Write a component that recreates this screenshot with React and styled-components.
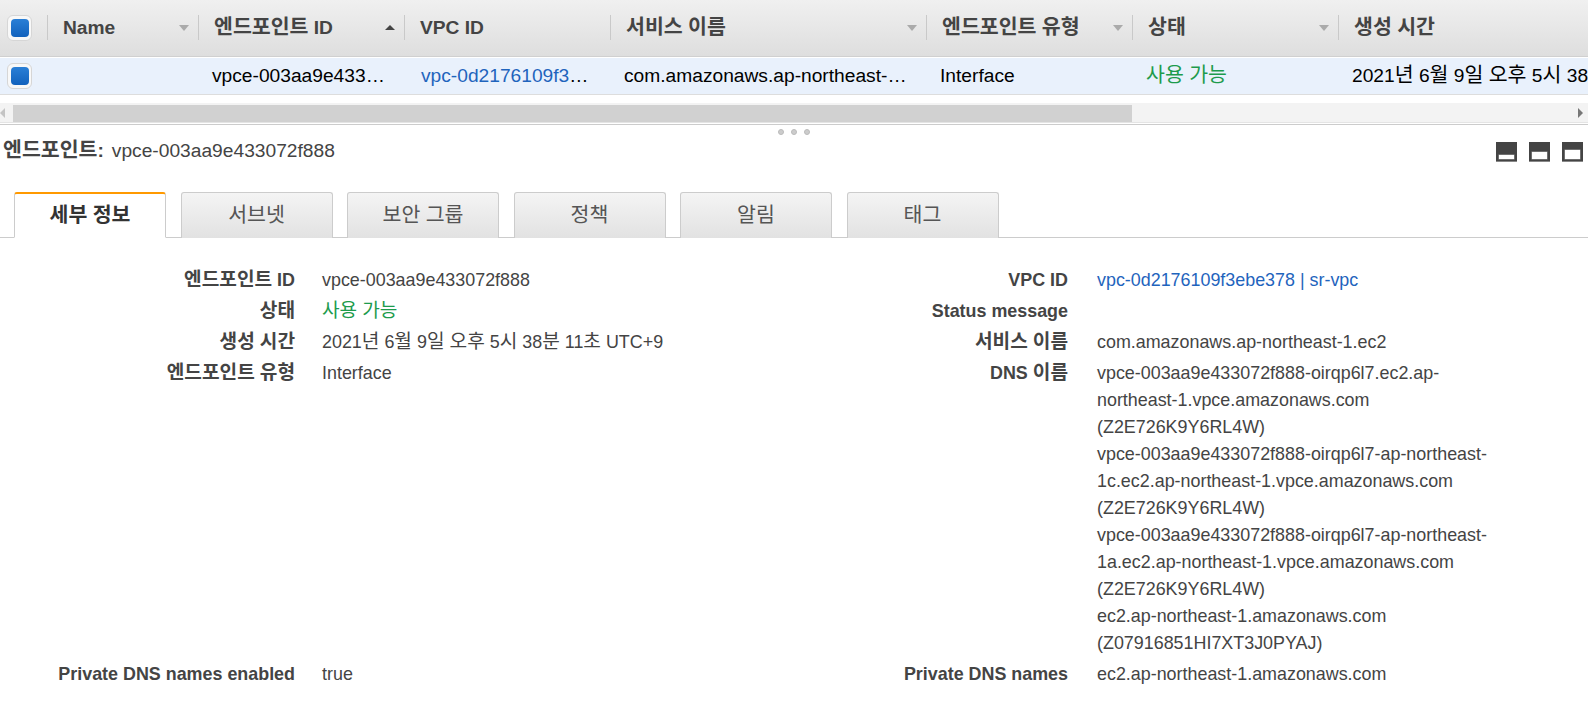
import React from "react";
import styled, { createGlobalStyle } from "styled-components";

const Global = createGlobalStyle`
  html, body { margin: 0; padding: 0; background: #fff; overflow: hidden; height: 100%; }
  body { font-family: "Liberation Sans", "Noto Sans CJK KR", sans-serif; color: #444; }
  * { box-sizing: border-box; }
`;

const COLUMNS = "47px 151px 206px 206px 316px 206px 206px 420px";

const Page = styled.div`width: 1588px; height: 709px; overflow: hidden;`;
const Ko = styled.span`font-size: 1.07em; line-height: 1;`;
const HeaderRow = styled.div`
  display: grid; grid-template-columns: ${COLUMNS}; height: 57px; width: 1758px;
  background: linear-gradient(#f0f0f0, #dedede);
  border-bottom: 1px solid #d0d0d0; align-items: center;
`;
const HeadCell = styled.div`
  height: 25px; margin-top: -1px; display: flex; align-items: center; justify-content: space-between;
  padding: 0 9px 0 15px; border-left: 1px solid #c9c9c9;
  font-size: 19.2px; font-weight: 700; color: #444; white-space: nowrap;
`;
const CheckCell = styled.div`display: flex; align-items: center; padding-left: 7px;`;
const CheckBox = styled.div`
  width: 25px; height: 26px; border: 1px solid #d6d6d6; border-radius: 6px; background: #f8f8f8;
  display: flex; align-items: center; justify-content: center;
`;
const CheckFill = styled.div`
  width: 18px; height: 18px; border-radius: 4px; background: linear-gradient(#2a7fd6, #1262bd);
`;
const SortMark = styled.span`
  width: 0; height: 0; border-left: 5px solid transparent; border-right: 5px solid transparent;
  ${p => (p.$up ? "border-bottom: 5px solid #444;" : "border-top: 6px solid #aaa;")}
`;
const DataRow = styled.div`
  display: grid; grid-template-columns: ${COLUMNS}; height: 38px; width: 1758px;
  background: #e9f1fc; border-bottom: 1px solid #dddddd; align-items: center;
  border-top: 1px solid #fff;
`;
const DataCell = styled.div`
  padding: 0 14px 0 ${p => p.$pl || 14}px; font-size: 19.2px; color: ${p => p.$color || "#000"};
  overflow: hidden; text-overflow: ellipsis; white-space: nowrap; margin-top: -1px; line-height: 27px;
`;
const LinkText = styled.span`color: #1f64bd;`;
const Gap = styled.div`height: 8px;`;
const ScrollTrack = styled.div`
  height: 19px; background: #f3f3f3; display: flex; align-items: flex-end; position: relative;
`;
const ScrollThumb = styled.div`height: 17px; width: 1119px; margin-left: 13px; background: #d1d1d1;`;
const ArrowLeft = styled.span`
  position: absolute; left: 0; top: 5px; border-top: 5px solid transparent; border-bottom: 5px solid transparent;
  border-right: 5px solid #c4c4c4;
`;
const ArrowRight = styled.span`
  position: absolute; right: 5px; top: 5px; border-top: 5px solid transparent; border-bottom: 5px solid transparent;
  border-left: 5px solid #777;
`;
const Divider = styled.div`height: 3px; border-bottom: 1px solid #ccc; background: #fff; border-top: 1px solid #e4e4e4;`;
const Dots = styled.div`display: flex; justify-content: center; gap: 7px; height: 8px; margin-top: 4px;`;
const Dot = styled.span`
  width: 6px; height: 6px; border-radius: 50%; background: #ccc; border: 1px solid #bbb;
`;
const TitleBar = styled.div`
  display: flex; align-items: center; justify-content: space-between; height: 28px; padding: 0 5px 0 3px;
`;
const Title = styled.div`font-size: 19.2px; color: #444; white-space: nowrap; line-height: 28px;`;
const TitleKey = styled.b`font-weight: 700; margin-right: 8px;`;
const PaneIcons = styled.div`display: flex; gap: 12px; margin-top: 2px;`;
const Tabs = styled.div`
  display: flex; gap: 14.5px; padding-left: 14px; height: 46px; margin-top: 27px; border-bottom: 1px solid #ccc;
`;
const Tab = styled.div`
  width: 152px; height: 46px; display: flex; align-items: center; justify-content: center;
  font-size: 19.2px; border-radius: 3px 3px 0 0; color: ${p => (p.$active ? "#333" : "#555")};
  font-weight: ${p => (p.$active ? 700 : 400)};
  background: ${p => (p.$active ? "#fff" : "linear-gradient(#f4f4f4, #e2e2e2)")};
  border: 1px solid #ccc; border-top: ${p => (p.$active ? "2px solid #f90" : "1px solid #ccc")};
  border-bottom: ${p => (p.$active ? "1px solid #fff" : "none")};
`;
const Details = styled.div`
  display: grid; grid-template-columns: 295px 483px 290px 430px; margin-top: 29px;
  font-size: 17.9px; line-height: 27px; color: #444;
`;
const Label = styled.div`
  text-align: right; font-weight: 700; color: #444; white-space: nowrap; margin-bottom: 4px;
`;
const Value = styled.div`padding-left: 27px; color: ${p => p.$color || "#444"}; margin-bottom: 4px; white-space: nowrap;`;
const ValueRight = styled(Value)`padding-left: 29px; white-space: normal; overflow-wrap: anywhere;`;

function Mixed({ text }) {
  return text.split(/([가-힣]+)/).map((part, i) => (i % 2 ? <Ko key={i}>{part}</Ko> : part));
}

function PaneIcon({ y, h }) {
  return (
    <svg width="21" height="20" viewBox="0 0 21 20">
      <rect width="21" height="19" fill="#444" />
      <rect y="19" width="21" height="1" fill="#888" />
      <rect x="2.5" y={y - 0.5} width="16" height={h + 1} fill="#999" />
      <rect x="3" y={y} width="15" height={h} fill="#fff" />
    </svg>
  );
}

export default function App() {
  const heads = [
    ["Name", "down"], ["엔드포인트 ID", "up"], ["VPC ID"], ["서비스 이름", "down"],
    ["엔드포인트 유형", "down"], ["상태", "down"], ["생성 시간"],
  ];
  const date = "2021년 6월 9일 오후 5시 38분 11초 UTC+9";
  return (
    <Page>
      <Global />
      <HeaderRow>
        <CheckCell><CheckBox><CheckFill /></CheckBox></CheckCell>
        {heads.map(([t, s]) => (
          <HeadCell key={t}>
            <span><Mixed text={t} /></span>
            {s && <SortMark $up={s === "up"} />}
          </HeadCell>
        ))}
      </HeaderRow>
      <DataRow>
        <CheckCell><CheckBox><CheckFill /></CheckBox></CheckCell>
        <DataCell />
        <DataCell>vpce-003aa9e433072f888</DataCell>
        <DataCell $pl={17}><LinkText>vpc-0d2176109f3ebe378</LinkText></DataCell>
        <DataCell>com.amazonaws.ap-northeast-1.ec2</DataCell>
        <DataCell>Interface</DataCell>
        <DataCell $color="#1d9b4c"><Mixed text="사용 가능" /></DataCell>
        <DataCell><Mixed text={date} /></DataCell>
      </DataRow>
      <Gap />
      <ScrollTrack>
        <ArrowLeft />
        <ScrollThumb />
        <ArrowRight />
      </ScrollTrack>
      <Divider />
      <Dots><Dot /><Dot /><Dot /></Dots>
      <TitleBar>
        <Title><TitleKey><Mixed text="엔드포인트:" /></TitleKey>vpce-003aa9e433072f888</Title>
        <PaneIcons>
          <PaneIcon y={13} h={4} />
          <PaneIcon y={10} h={7} />
          <PaneIcon y={8} h={9} />
        </PaneIcons>
      </TitleBar>
      <Tabs>
        {["세부 정보", "서브넷", "보안 그룹", "정책", "알림", "태그"].map((t, i) => (
          <Tab key={t} $active={i === 0}><span><Mixed text={t} /></span></Tab>
        ))}
      </Tabs>
      <Details>
        <Label><Mixed text="엔드포인트 ID" /></Label>
        <Value>vpce-003aa9e433072f888</Value>
        <Label>VPC ID</Label>
        <ValueRight><LinkText>vpc-0d2176109f3ebe378 | sr-vpc</LinkText></ValueRight>

        <Label><Mixed text="상태" /></Label>
        <Value $color="#1d9b4c"><Mixed text="사용 가능" /></Value>
        <Label>Status message</Label>
        <ValueRight />

        <Label><Mixed text="생성 시간" /></Label>
        <Value><Mixed text={date} /></Value>
        <Label><Mixed text="서비스 이름" /></Label>
        <ValueRight>com.amazonaws.ap-northeast-1.ec2</ValueRight>

        <Label><Mixed text="엔드포인트 유형" /></Label>
        <Value>Interface</Value>
        <Label><Mixed text="DNS 이름" /></Label>
        <ValueRight>
          <div>vpce-003aa9e433072f888-oirqp6l7.ec2.ap-northeast-1.vpce.amazonaws.com (Z2E726K9Y6RL4W)</div>
          <div>vpce-003aa9e433072f888-oirqp6l7-ap-northeast-1c.ec2.ap-northeast-1.vpce.amazonaws.com (Z2E726K9Y6RL4W)</div>
          <div>vpce-003aa9e433072f888-oirqp6l7-ap-northeast-1a.ec2.ap-northeast-1.vpce.amazonaws.com (Z2E726K9Y6RL4W)</div>
          <div>ec2.ap-northeast-1.amazonaws.com (Z07916851HI7XT3J0PYAJ)</div>
        </ValueRight>

        <Label>Private DNS names enabled</Label>
        <Value>true</Value>
        <Label>Private DNS names</Label>
        <ValueRight>ec2.ap-northeast-1.amazonaws.com</ValueRight>
      </Details>
    </Page>
  );
}
